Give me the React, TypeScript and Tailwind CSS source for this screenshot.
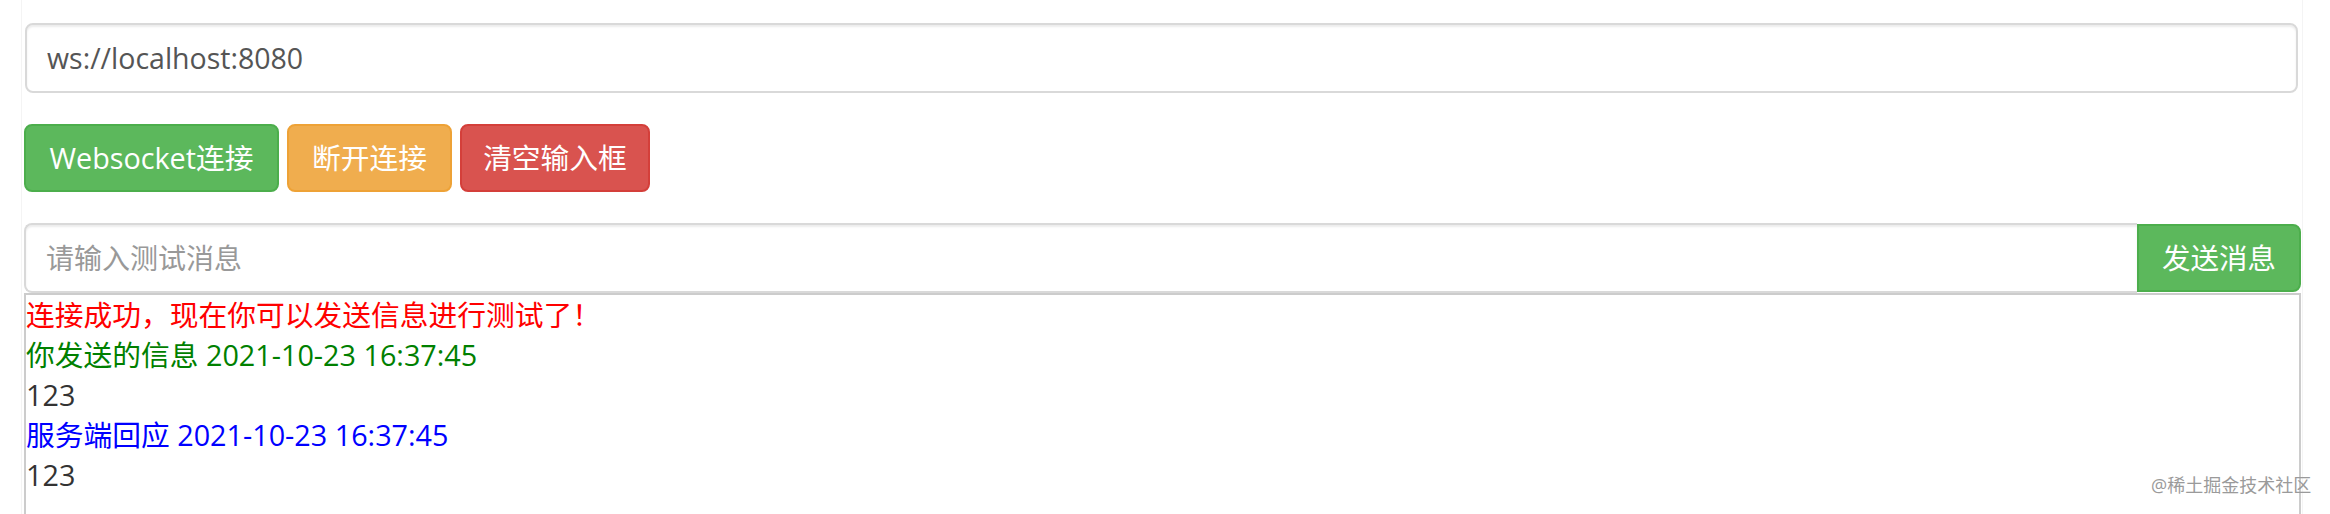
import React, { useState } from 'react';

const font = "font-['Open_Sans','Noto_Sans_CJK_SC',sans-serif]";

type Msg = { text: string; color: string };

const App: React.FC = () => {
    const [url, setUrl] = useState('ws://localhost:8080');
    const [draft, setDraft] = useState('');
    const [messages] = useState<Msg[]>([
        { text: '连接成功，现在你可以发送信息进行测试了！', color: 'text-[#ff0000]' },
        { text: '你发送的信息 2021-10-23 16:37:45', color: 'text-[#008000]' },
        { text: '123', color: 'text-[#333333]' },
        { text: '服务端回应 2021-10-23 16:37:45', color: 'text-[#0000ff]' },
        { text: '123', color: 'text-[#333333]' },
    ]);

    return (
        <div className={`relative min-h-[514px] bg-white ${font} text-[28px]`}>
            <div className="ml-[21px] w-[2282px] min-h-[514px] border-x border-[#f4f4f4] pl-[2px] pr-[1px] pt-[23px]">
                {/* Address */}
                <input
                    type="text"
                    value={url}
                    onChange={(e) => setUrl(e.target.value)}
                    className="block ml-[1px] mr-[3px] w-[2273px] h-[70px] px-[20px] rounded-[8px] border-2 border-[#d9d9d9] bg-white text-[#555] text-[28.5px] shadow-[inset_0_2px_2px_rgba(0,0,0,0.075)] outline-none"
                />

                {/* Actions */}
                <div className="flex gap-[8px] mt-[31px] text-[28.75px]">
                    <button className="h-[68px] w-[255px] flex items-center justify-center rounded-[8px] border-2 border-[#4cae4c] bg-[#5cb85c] text-white">
                        Websocket连接
                    </button>
                    <button className="h-[68px] w-[165px] flex items-center justify-center rounded-[8px] border-2 border-[#eea236] bg-[#f0ad4e] text-white">
                        断开连接
                    </button>
                    <button className="h-[68px] w-[190px] flex items-center justify-center rounded-[8px] border-2 border-[#d43f3a] bg-[#d9534f] text-white">
                        清空输入框
                    </button>
                </div>

                {/* Send */}
                <div className="flex items-center mt-[31px]">
                    <input
                        type="text"
                        value={draft}
                        onChange={(e) => setDraft(e.target.value)}
                        placeholder="请输入测试消息"
                        className="flex-1 h-[70px] px-[20px] rounded-l-[8px] border-2 border-r-0 border-[#d9d9d9] bg-white text-[#555] text-[28px] placeholder:text-[#999] shadow-[inset_0_2px_2px_rgba(0,0,0,0.075)] outline-none"
                    />
                    <button className="h-[68px] w-[164px] flex items-center justify-center rounded-r-[8px] border-2 border-[#4cae4c] bg-[#5cb85c] text-white text-[28.5px]">
                        发送消息
                    </button>
                </div>

                {/* Log */}
                <div className="h-[400px] border-2 border-[#cccccc] text-[28.75px] leading-[40px]">
                    {messages.map((m, i) => (
                        <div key={i} className={m.color}>
                            {m.text}
                        </div>
                    ))}
                </div>
            </div>

            {/* watermark */}
            <div className="absolute left-[2151px] top-[474px] text-[18px] leading-[22px] text-[#9a9a9a]">
                @稀土掘金技术社区
            </div>
        </div>
    );
};

export default App;
